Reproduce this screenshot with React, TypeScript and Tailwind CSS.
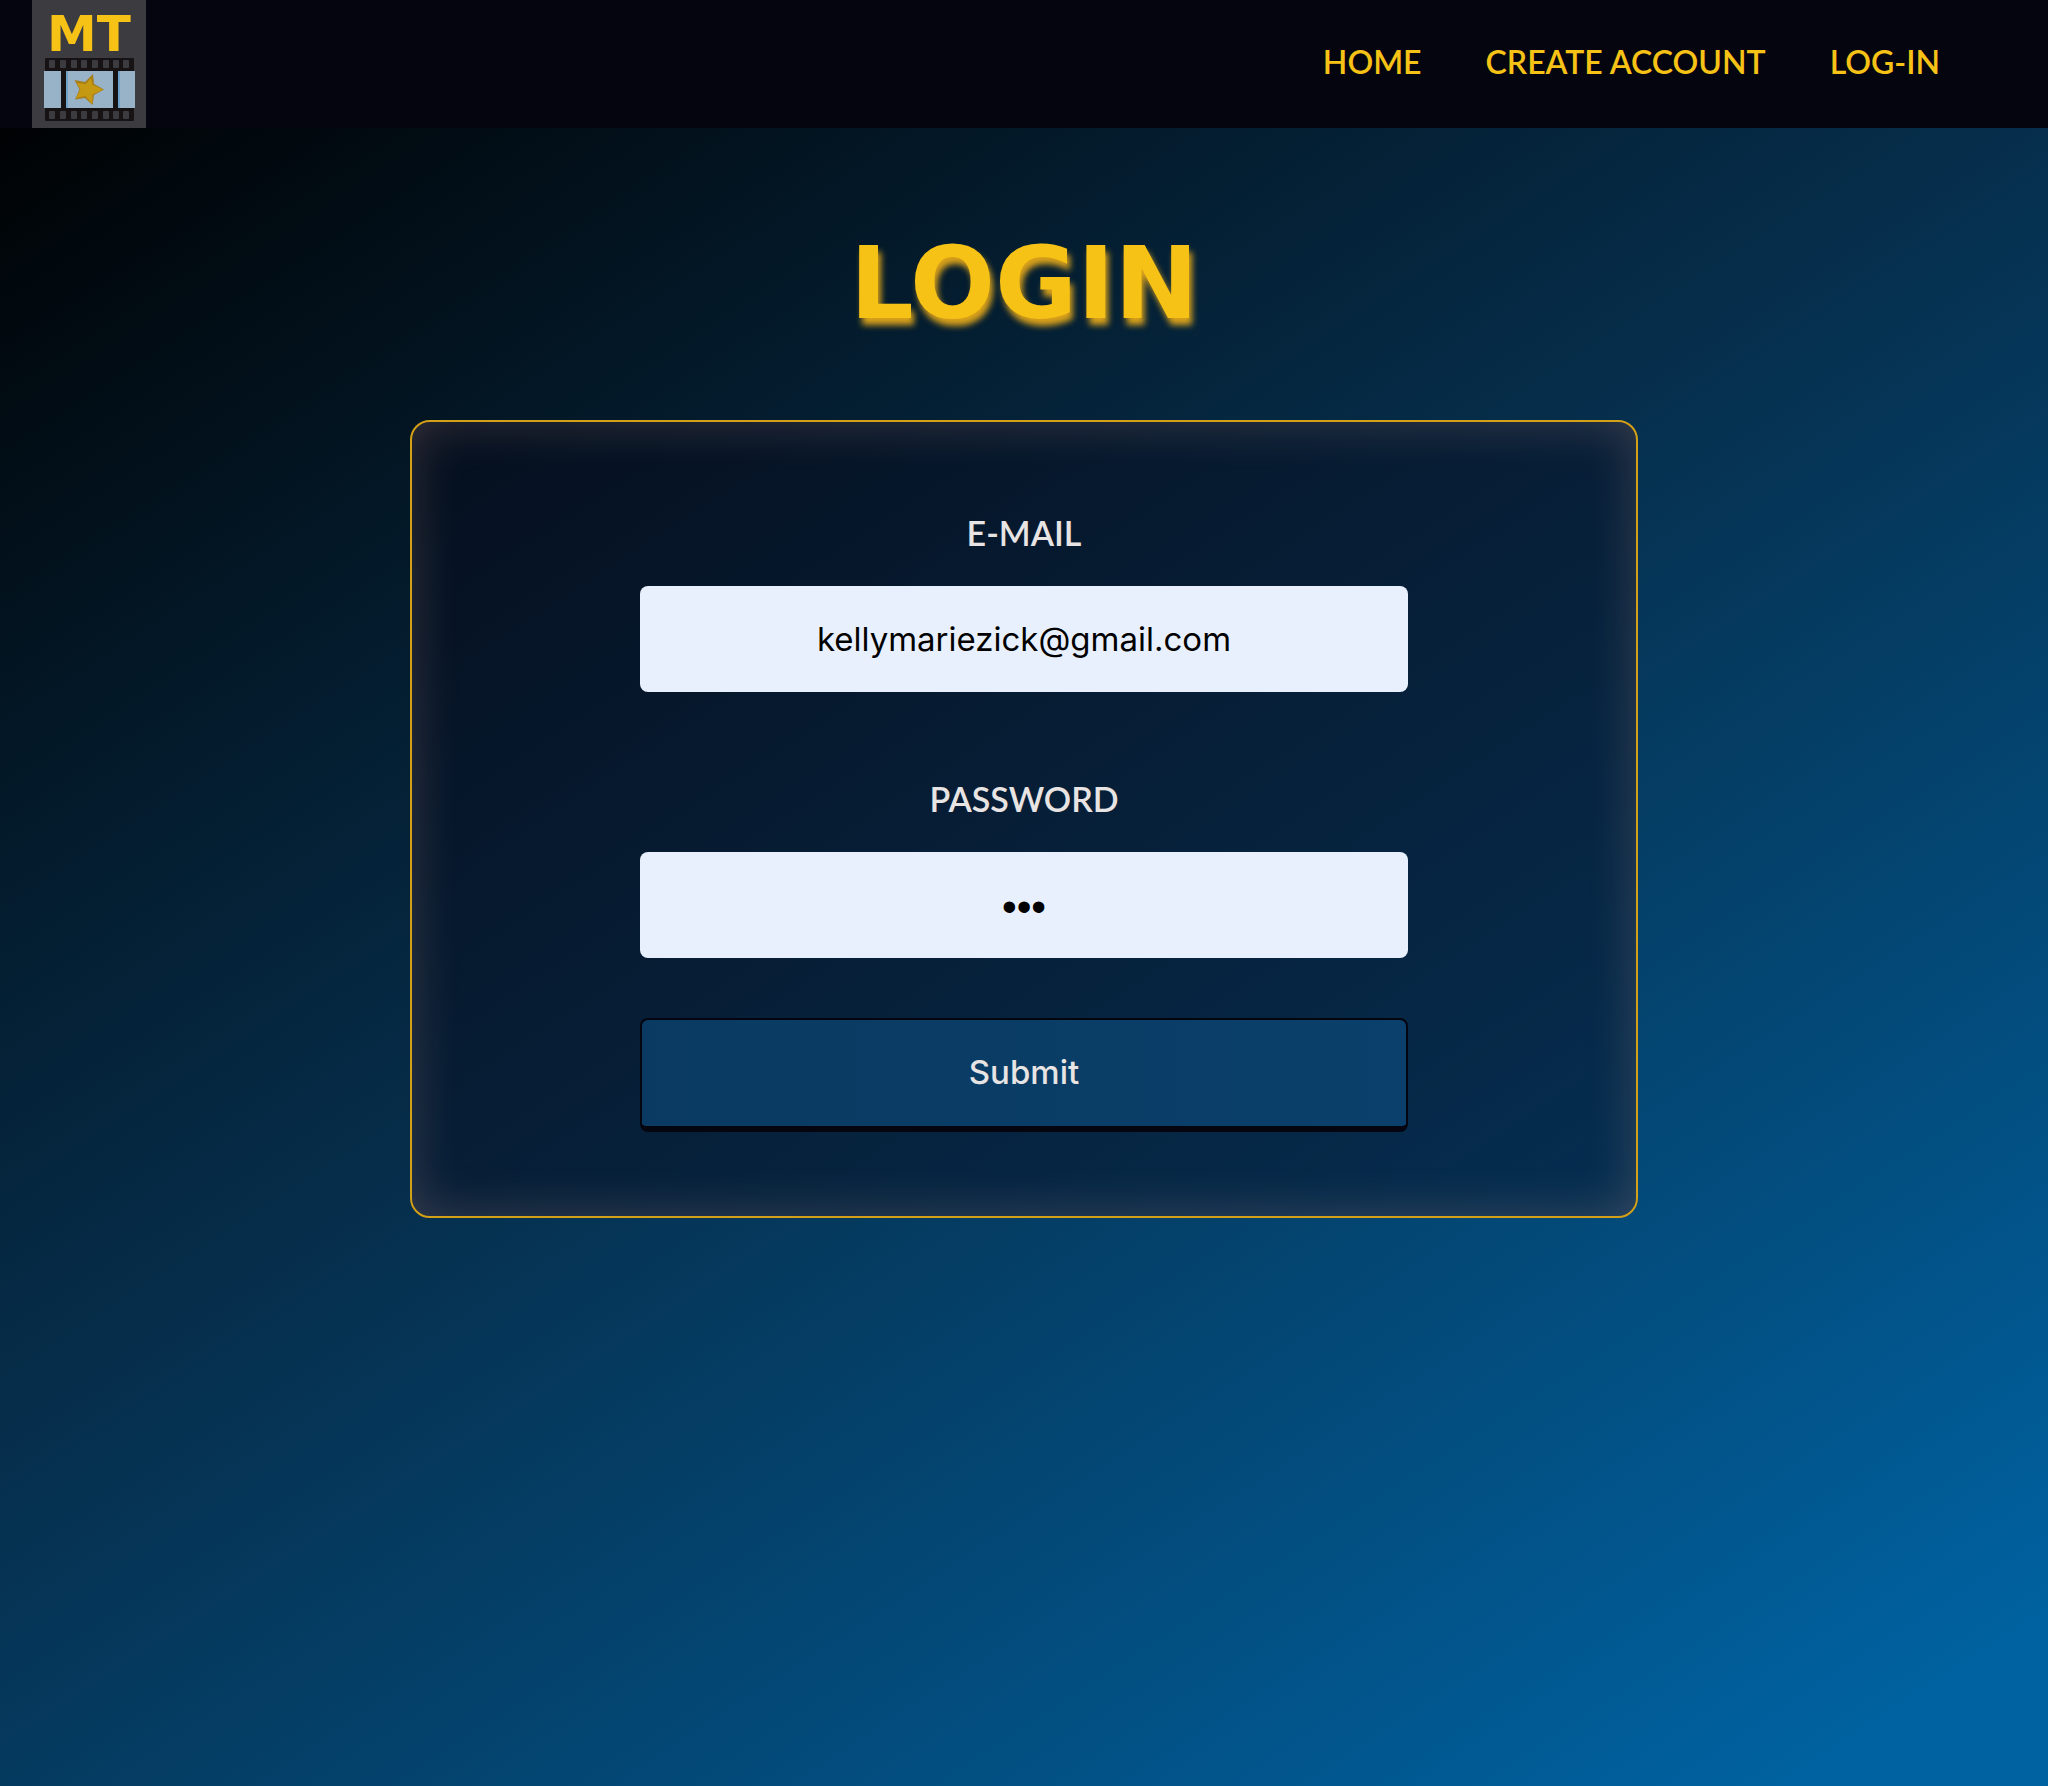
import React from "react";

const navLinks = ["HOME", "CREATE ACCOUNT", "LOG-IN"];
const perforations = [48, 59, 70, 80, 91, 102, 112, 122];

function FilmStrip() {
  return (
    <svg viewBox="43 57 91 65" className="h-[65px] w-[91px]" aria-hidden="true">
      <rect x="44" y="58" width="89" height="63" rx="1" fill="#171314" />
      {perforations.map((x) => (
        <g key={x} fill="#3c3b40">
          <rect x={x} y="60" width="6" height="8" rx="1" />
          <rect x={x} y="111" width="6" height="8" rx="1" />
        </g>
      ))}
      <rect x="43" y="71" width="17" height="37" fill="#98b2c7" />
      <rect x="65" y="71" width="47" height="37" fill="#98b2c7" />
      <rect x="117" y="71" width="17" height="37" fill="#98b2c7" />
      <rect x="65" y="71" width="2" height="37" fill="#6fa3c9" />
      <rect x="117" y="71" width="2" height="37" fill="#6fa3c9" />
      <path d="M92 74 93 84 103 89.5 93 95 91.5 105 84 98 74 99.5 78.5 89.5 73.5 80 84 82Z" fill="#a77d16" />
      <path d="M90 78 91.5 85 102 89.5 91.5 94.5 91 104 84.5 96 75 98 79.5 89.5 76 83 85 84Z" fill="#c59a12" />
    </svg>
  );
}

const fieldClass = "h-[106px] w-full rounded-lg bg-[#e8f0fe] text-center text-black outline-none";
const labelClass =
  "mb-6 block pb-1 text-center font-['Lato',sans-serif] text-[34px] leading-[50px] font-semibold text-[#e8e4e3]";

export default function App() {
  return (
    <div className="flex min-h-screen flex-col bg-[linear-gradient(147deg,#000000_2%,#062f4d_47%,#0062a1_95%)]">
      <header className="flex h-32 items-center justify-between bg-[#050510] pr-[108px] pl-8">
        <a href="#home" aria-label="MT home" className="flex h-32 w-[114px] flex-col items-center bg-[#3c3b40] pt-[11px]">
          <span className="font-['DejaVu_Sans',sans-serif] text-[50px] leading-[46px] font-bold text-[#f7c216]">MT</span>
          <FilmStrip />
        </a>
        <nav className="flex gap-16 pb-1">
          {navLinks.map((label) => (
            <a key={label} href="#" className="font-['Lato',sans-serif] text-[32px] leading-10 font-semibold text-[#f7c216]">
              {label}
            </a>
          ))}
        </nav>
      </header>
      <main className="flex flex-col items-center">
        <h1 className="mt-24 font-['DejaVu_Sans',sans-serif] text-[100px] leading-[120px] font-bold text-[#f7c216] [text-shadow:3px_7px_6px_#daa21b]">
          LOGIN
        </h1>
        <form
          onSubmit={(e) => e.preventDefault()}
          className="mt-[76px] flex w-3/5 flex-col items-center rounded-[20px] border-2 border-[#d4a017] bg-[#0a0818]/42 px-6 pt-[86px] pb-[84px] shadow-[inset_0_0_50px_rgba(255,190,170,0.2)]"
        >
          <div className="flex w-full max-w-[768px] flex-col">
            <label htmlFor="email" className={labelClass}>E-MAIL</label>
            <input
              id="email"
              type="email"
              defaultValue="kellymariezick@gmail.com"
              className={`${fieldClass} font-['Inter',sans-serif] text-[33px]`}
            />
            <label htmlFor="password" className={`mt-[82px] ${labelClass}`}>PASSWORD</label>
            <input
              id="password"
              type="password"
              defaultValue="abc"
              className={`${fieldClass} pt-1 font-['Liberation_Sans',sans-serif] text-[42px]`}
            />
            <button
              type="submit"
              className="mt-[60px] h-[114px] w-full rounded-lg border-2 border-b-[6px] border-[#050510] bg-linear-to-r from-[#0a3a61] to-[#0a406b] bg-origin-border font-['Inter',sans-serif] text-[33px] font-medium text-[#e8e4e3]"
            >
              Submit
            </button>
          </div>
        </form>
      </main>
    </div>
  );
}
